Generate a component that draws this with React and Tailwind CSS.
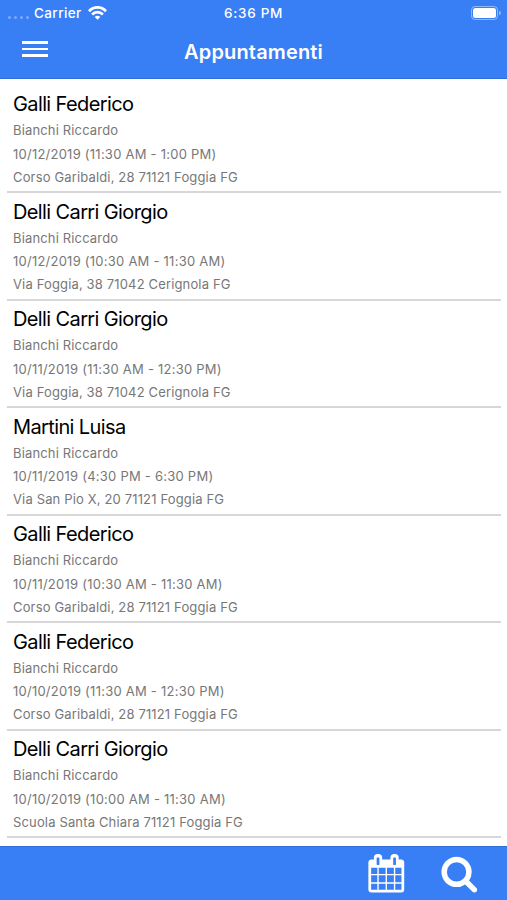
const appointments = [
  {client: "Galli Federico", date: "10/12/2019 (11:30 AM - 1:00 PM)", place: "Corso Garibaldi, 28 71121 Foggia FG"},
  {client: "Delli Carri Giorgio", date: "10/12/2019 (10:30 AM - 11:30 AM)", place: "Via Foggia, 38 71042 Cerignola FG"},
  {client: "Delli Carri Giorgio", date: "10/11/2019 (11:30 AM - 12:30 PM)", place: "Via Foggia, 38 71042 Cerignola FG"},
  {client: "Martini Luisa", date: "10/11/2019 (4:30 PM - 6:30 PM)", place: "Via San Pio X, 20 71121 Foggia FG"},
  {client: "Galli Federico", date: "10/11/2019 (10:30 AM - 11:30 AM)", place: "Corso Garibaldi, 28 71121 Foggia FG"},
  {client: "Galli Federico", date: "10/10/2019 (11:30 AM - 12:30 PM)", place: "Corso Garibaldi, 28 71121 Foggia FG"},
  {client: "Delli Carri Giorgio", date: "10/10/2019 (10:00 AM - 11:30 AM)", place: "Scuola Santa Chiara 71121 Foggia FG"},
]

function WifiIcon() {
  return (
    <svg className="w-[19px] h-[14px] ml-[6px]" viewBox="0 0 19 14" fill="none" stroke="white" strokeWidth="2.7">
      <path d="M1 5.2C5.8 .2 13.2 .2 18 5.2"/>
      <path d="M4.1 8.5C7.2 5.4 11.8 5.4 14.9 8.5"/>
      <path d="M9.5 13.8L6.7 11C8.3 9.4 10.7 9.4 12.3 11Z" fill="white" stroke="none"/>
    </svg>
  )
}

function StatusBar() {
  return (
    <div className="grid grid-cols-3 items-center h-[26px] text-[13.5px] font-medium">
      <div className="flex items-center pl-2">
        <div className="flex gap-[3px] mt-2 mr-[5px]">
          <span className="size-[3px] rounded-full bg-white/35"/>
          <span className="size-[3px] rounded-full bg-white/35"/>
          <span className="size-[3px] rounded-full bg-white/35"/>
          <span className="size-[3px] rounded-full bg-white/35"/>
        </div>
        <span className="tracking-[0.4px]">Carrier</span>
        <WifiIcon/>
      </div>
      <div className="text-center tracking-[0.7px]">6:36 PM</div>
      <div className="flex items-center justify-end pr-[6px]">
        <div className="w-[27px] h-[14px] p-[1px] rounded-[4px] border border-white/45">
          <div className="h-full rounded-[2.5px] bg-white"/>
        </div>
        <span className="w-[2px] h-[4px] ml-[1px] rounded-r-full bg-white/45"/>
      </div>
    </div>
  )
}

function Header() {
  return (
    <header className="h-[79px] bg-[#387ef5] border-b border-[#3170da] text-white shrink-0">
      <StatusBar/>
      <div className="grid grid-cols-[80px_1fr_80px] h-[52px]">
        <button className="flex flex-col gap-[4px] pl-[22px] pt-[15px]">
          <span className="w-[26px] h-[2.5px] bg-white"/>
          <span className="w-[26px] h-[2.5px] bg-white"/>
          <span className="w-[26px] h-[2.5px] bg-white"/>
        </button>
        <h1 className="text-center text-[20px] leading-[52px] font-semibold tracking-[0.15px]">Appuntamenti</h1>
      </div>
    </header>
  )
}

function Appointment({client, date, place}) {
  return (
    <li className="h-[107.5px] ml-[7px] mr-[6px] px-[6px] pt-[5.5px] border-b-2 border-[#d7d7d7] whitespace-nowrap">
      <h2 className="text-[20px] leading-[27px] tracking-[-0.62px] text-black">{client}</h2>
      <div className="text-[13px] leading-[23.3px] text-[#777] tracking-[0.15px] pt-[1.3px]">
        <p>Bianchi Riccardo</p>
        <p className="tracking-[0.24px]">{date}</p>
        <p>{place}</p>
      </div>
    </li>
  )
}

function Footer() {
  return (
    <footer className="h-[54px] flex items-start bg-[#387ef5] border-t border-[#3170da] text-white shrink-0">
      <button className="ml-auto mt-[7px] mr-[35px]">
        <svg className="w-[38.6px] h-[38.6px]" viewBox="0 0 1792 1792" fill="currentColor">
          <path d="M192 1664h288v-288h-288v288zM544 1664h320v-288h-320v288zM192 1312h288v-320h-288v320zM544 1312h320v-320h-320v320zM192 928h288v-288h-288v288zM928 1664h320v-288h-320v288zM544 928h320v-288h-320v288zM1312 1664h288v-288h-288v288zM928 1312h320v-320h-320v320zM576 480v-288q0-13-9.5-22.5t-22.5-9.5h-64q-13 0-22.5 9.5t-9.5 22.5v288q0 13 9.5 22.5t22.5 9.5h64q13 0 22.5-9.5t9.5-22.5zM1312 1312h288v-320h-288v320zM928 928h320v-288h-320v288zM1312 928h288v-288h-288v288zM1344 480v-288q0-13-9.5-22.5t-22.5-9.5h-64q-13 0-22.5 9.5t-9.5 22.5v288q0 13 9.5 22.5t22.5 9.5h64q13 0 22.5-9.5t9.5-22.5zM1728 384v1280q0 52-38 90t-90 38h-1408q-52 0-90-38t-38-90v-1280q0-52 38-90t90-38h128v-96q0-66 47-113t113-47h64q66 0 113 47t47 113v96h384v-96q0-66 47-113t113-47h64q66 0 113 47t47 113v96h128q52 0 90 38t38 90z"/>
        </svg>
      </button>
      <button className="mt-[7px] mr-[28px]">
        <svg className="w-[38.6px] h-[38.6px]" viewBox="0 0 1792 1792" fill="currentColor">
          <path d="M1216 832q0-185-131.5-316.5t-316.5-131.5-316.5 131.5-131.5 316.5 131.5 316.5 316.5 131.5 316.5-131.5 131.5-316.5zm512 832q0 52-38 90t-90 38q-54 0-90-38l-343-342q-179 124-399 124-143 0-273.5-55.5t-225-150-150-225-55.5-273.5 55.5-273.5 150-225 225-150 273.5-55.5 273.5 55.5 225 150 150 225 55.5 273.5q0 220-124 399l343 343q37 37 37 90z"/>
        </svg>
      </button>
    </footer>
  )
}

function App() {
  return (
    <div className="flex flex-col w-full h-[900px] overflow-hidden bg-white font-['Inter',sans-serif]">
      <Header/>
      <main className="flex-1 min-h-0 overflow-hidden pt-[6.5px]">
        <ul>
          {appointments.map((appointment, index) => (
            <Appointment key={index} {...appointment}/>
          ))}
        </ul>
      </main>
      <Footer/>
    </div>
  )
}

export default App
